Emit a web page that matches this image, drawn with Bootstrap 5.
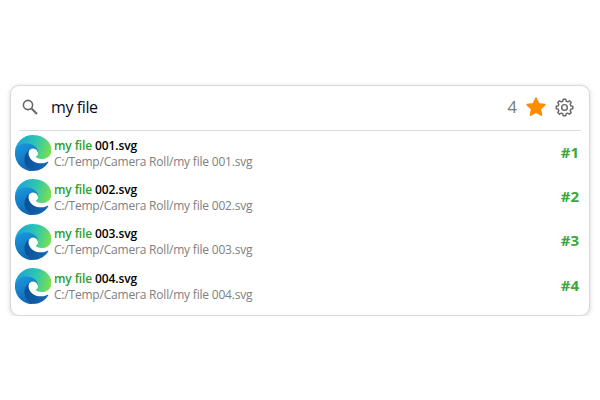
<!DOCTYPE html>
<html lang="en">
<head>
  <meta charset="UTF-8">
  <title>File search</title>
  <link href="https://cdn.jsdelivr.net/npm/bootstrap@5.3.3/dist/css/bootstrap.min.css" rel="stylesheet">
  <style>
    body { background: #fff; font-family: "Open Sans", "Noto Sans", sans-serif; padding: 85px 10px 0; }
    .finder { height: 231px; border: 1px solid #d8d8d8; border-radius: 9px; box-shadow: 0 1px 5px rgba(0,0,0,.16); }
    .finder-head { height: 44px; padding: 0 15px 2px 11px; }
    .finder-query { font-size: 16px; letter-spacing: -.4px; color: #0a0a28; margin-left: 13px; }
    .finder-count { font-size: 16.5px; color: #777; }
    .finder-rule { height: 1px; background: #ddd; margin: 0 8px; }
    .hit { height: 44.3px; padding: 0 10px 0 4px; }
    .hit-text { padding-top: 1px; }
    .hit-name { font-size: 12px; letter-spacing: -.12px; font-weight: 600; color: #000; line-height: 16px; }
    .hit-name b { color: #2ca02c; font-weight: 600; }
    .hit-path { font-size: 12px; letter-spacing: -.2px; color: #808080; line-height: 16px; }
    .hit-rank { font-size: 15px; font-weight: 700; color: #3aa83a; padding-bottom: 2px; }
    .hit-icon { margin-right: 3px; }
  </style>
</head>
<body>
  <svg width="0" height="0" class="position-absolute">
    <defs>
      <linearGradient id="edgeTop" gradientUnits="userSpaceOnUse" x1="10" y1="60" x2="250" y2="130">
        <stop offset="0" stop-color="#1ba5d8"/>
        <stop offset="0.5" stop-color="#2cc4b4"/>
        <stop offset="1" stop-color="#7ae04e"/>
      </linearGradient>
      <linearGradient id="edgeBlue" gradientUnits="userSpaceOnUse" x1="30" y1="70" x2="120" y2="250">
        <stop offset="0" stop-color="#1a96dc"/>
        <stop offset="1" stop-color="#0e62ae"/>
      </linearGradient>
      <linearGradient id="edgeDark" gradientUnits="userSpaceOnUse" x1="60" y1="170" x2="235" y2="190">
        <stop offset="0" stop-color="#0c4f94"/>
        <stop offset="1" stop-color="#1568b4"/>
      </linearGradient>
      <symbol id="edge" viewBox="0 0 256 256">
        <path fill="url(#edgeDark)" d="M231.07 190.54a93.73 93.73 0 0 1-10.54 4.71 101.87 101.87 0 0 1-35.9 6.46c-47.32 0-88.54-32.55-88.54-74.32A31.48 31.48 0 0 1 112.53 100c-42.8 1.8-53.8 46.4-53.8 72.53 0 73.88 68.09 81.37 82.76 81.37 7.91 0 19.84-2.3 27-4.56l1.31-.44a128.34 128.34 0 0 0 66.6-52.8 4 4 0 0 0-5.33-5.56z"/>
        <path fill="url(#edgeBlue)" d="M105.73 241.42A79.2 79.2 0 0 1 83 220.1a80.71 80.71 0 0 1 29.53-120c3.2-1.51 8.67-4.24 15.94-4.11a33.16 33.16 0 0 1 26.33 13.31 32.69 32.69 0 0 1 6.5 19.21c0-.21 25.2-81.91-82-81.91C34.3 46.6-1 88.6-1 126.6a133.73 133.73 0 0 0 12.44 57.54 128 128 0 0 0 156.38 67.11 75.55 75.55 0 0 1-62.09-9.83z"/>
        <path fill="url(#edgeTop)" d="M152.36 148.83c-.84 1.08-3.4 2.57-3.4 5.82 0 2.68 1.74 5.27 4.85 7.44 14.82 10.31 42.74 8.95 42.81 8.95a61.4 61.4 0 0 0 31.18-8.6 63.17 63.17 0 0 0 31.31-54.44c.27-23.07-8.24-38.42-11.68-45.21C225.06 20.1 177.9 0 126.6 0A128 128 0 0 0-1.4 126.2c.5-37.7 38-68.1 82.6-68.1 3.6 0 24.2.35 43.3 10.38 16.84 8.84 25.66 19.52 31.79 30.1 6.37 11 7.5 24.9 7.5 30.43s-2.82 13.74-8.05 20.5z"/>
      </symbol>
    </defs>
  </svg>

  <div class="finder bg-white">
    <div class="finder-head d-flex align-items-center">
      <svg width="16" height="16" viewBox="0 0 16 16" fill="none" stroke="#666" stroke-width="1.6">
        <circle cx="6" cy="6" r="4.6"/><path d="M9.5 9.5l5.5 5.5" stroke-width="2"/>
      </svg>
      <span class="finder-query flex-grow-1">my file</span>
      <span class="finder-count">4</span>
      <svg class="ms-2" width="22" height="22" viewBox="0 0 24 24" fill="#ff8c00" stroke="#ff8c00" stroke-width="2" stroke-linejoin="round">
        <path d="M12 2.500l2.900 6.200 6.600.8-4.900 4.600 1.300 6.600L12 17.400l-5.900 3.300 1.300-6.600L2.500 9.500l6.600-.8z"/>
      </svg>
      <svg class="ms-2" width="19" height="19" viewBox="0 0 24 24" fill="none" stroke="#666" stroke-width="1.8" stroke-linejoin="round">
        <circle cx="12" cy="12" r="3.600"/>
        <polygon points="19.88,9.74 22.5,10.52 22.5,13.48 19.88,14.26 19.17,15.98 20.47,18.38 18.38,20.47 15.98,19.17 14.26,19.88 13.48,22.5 10.52,22.5 9.74,19.88 8.02,19.17 5.62,20.47 3.53,18.38 4.83,15.98 4.12,14.26 1.5,13.48 1.5,10.52 4.12,9.74 4.83,8.02 3.53,5.62 5.62,3.53 8.02,4.83 9.74,4.12 10.52,1.5 13.48,1.5 14.26,4.12 15.98,4.83 18.38,3.53 20.47,5.62 19.17,8.02"/>
      </svg>
    </div>
    <div class="finder-rule"></div>
    <div class="hit d-flex align-items-center">
      <svg width="36" height="36" class="hit-icon flex-shrink-0"><use href="#edge"/></svg>
      <div class="hit-text flex-grow-1">
        <div class="hit-name"><b>my file</b> 001.svg</div>
        <div class="hit-path">C:/Temp/Camera Roll/my file 001.svg</div>
      </div>
      <span class="hit-rank">#1</span>
    </div>
    <div class="hit d-flex align-items-center">
      <svg width="36" height="36" class="hit-icon flex-shrink-0"><use href="#edge"/></svg>
      <div class="hit-text flex-grow-1">
        <div class="hit-name"><b>my file</b> 002.svg</div>
        <div class="hit-path">C:/Temp/Camera Roll/my file 002.svg</div>
      </div>
      <span class="hit-rank">#2</span>
    </div>
    <div class="hit d-flex align-items-center">
      <svg width="36" height="36" class="hit-icon flex-shrink-0"><use href="#edge"/></svg>
      <div class="hit-text flex-grow-1">
        <div class="hit-name"><b>my file</b> 003.svg</div>
        <div class="hit-path">C:/Temp/Camera Roll/my file 003.svg</div>
      </div>
      <span class="hit-rank">#3</span>
    </div>
    <div class="hit d-flex align-items-center">
      <svg width="36" height="36" class="hit-icon flex-shrink-0"><use href="#edge"/></svg>
      <div class="hit-text flex-grow-1">
        <div class="hit-name"><b>my file</b> 004.svg</div>
        <div class="hit-path">C:/Temp/Camera Roll/my file 004.svg</div>
      </div>
      <span class="hit-rank">#4</span>
    </div>
  </div>

  <script src="https://cdn.jsdelivr.net/npm/bootstrap@5.3.3/dist/js/bootstrap.bundle.min.js"></script>
</body>
</html>
